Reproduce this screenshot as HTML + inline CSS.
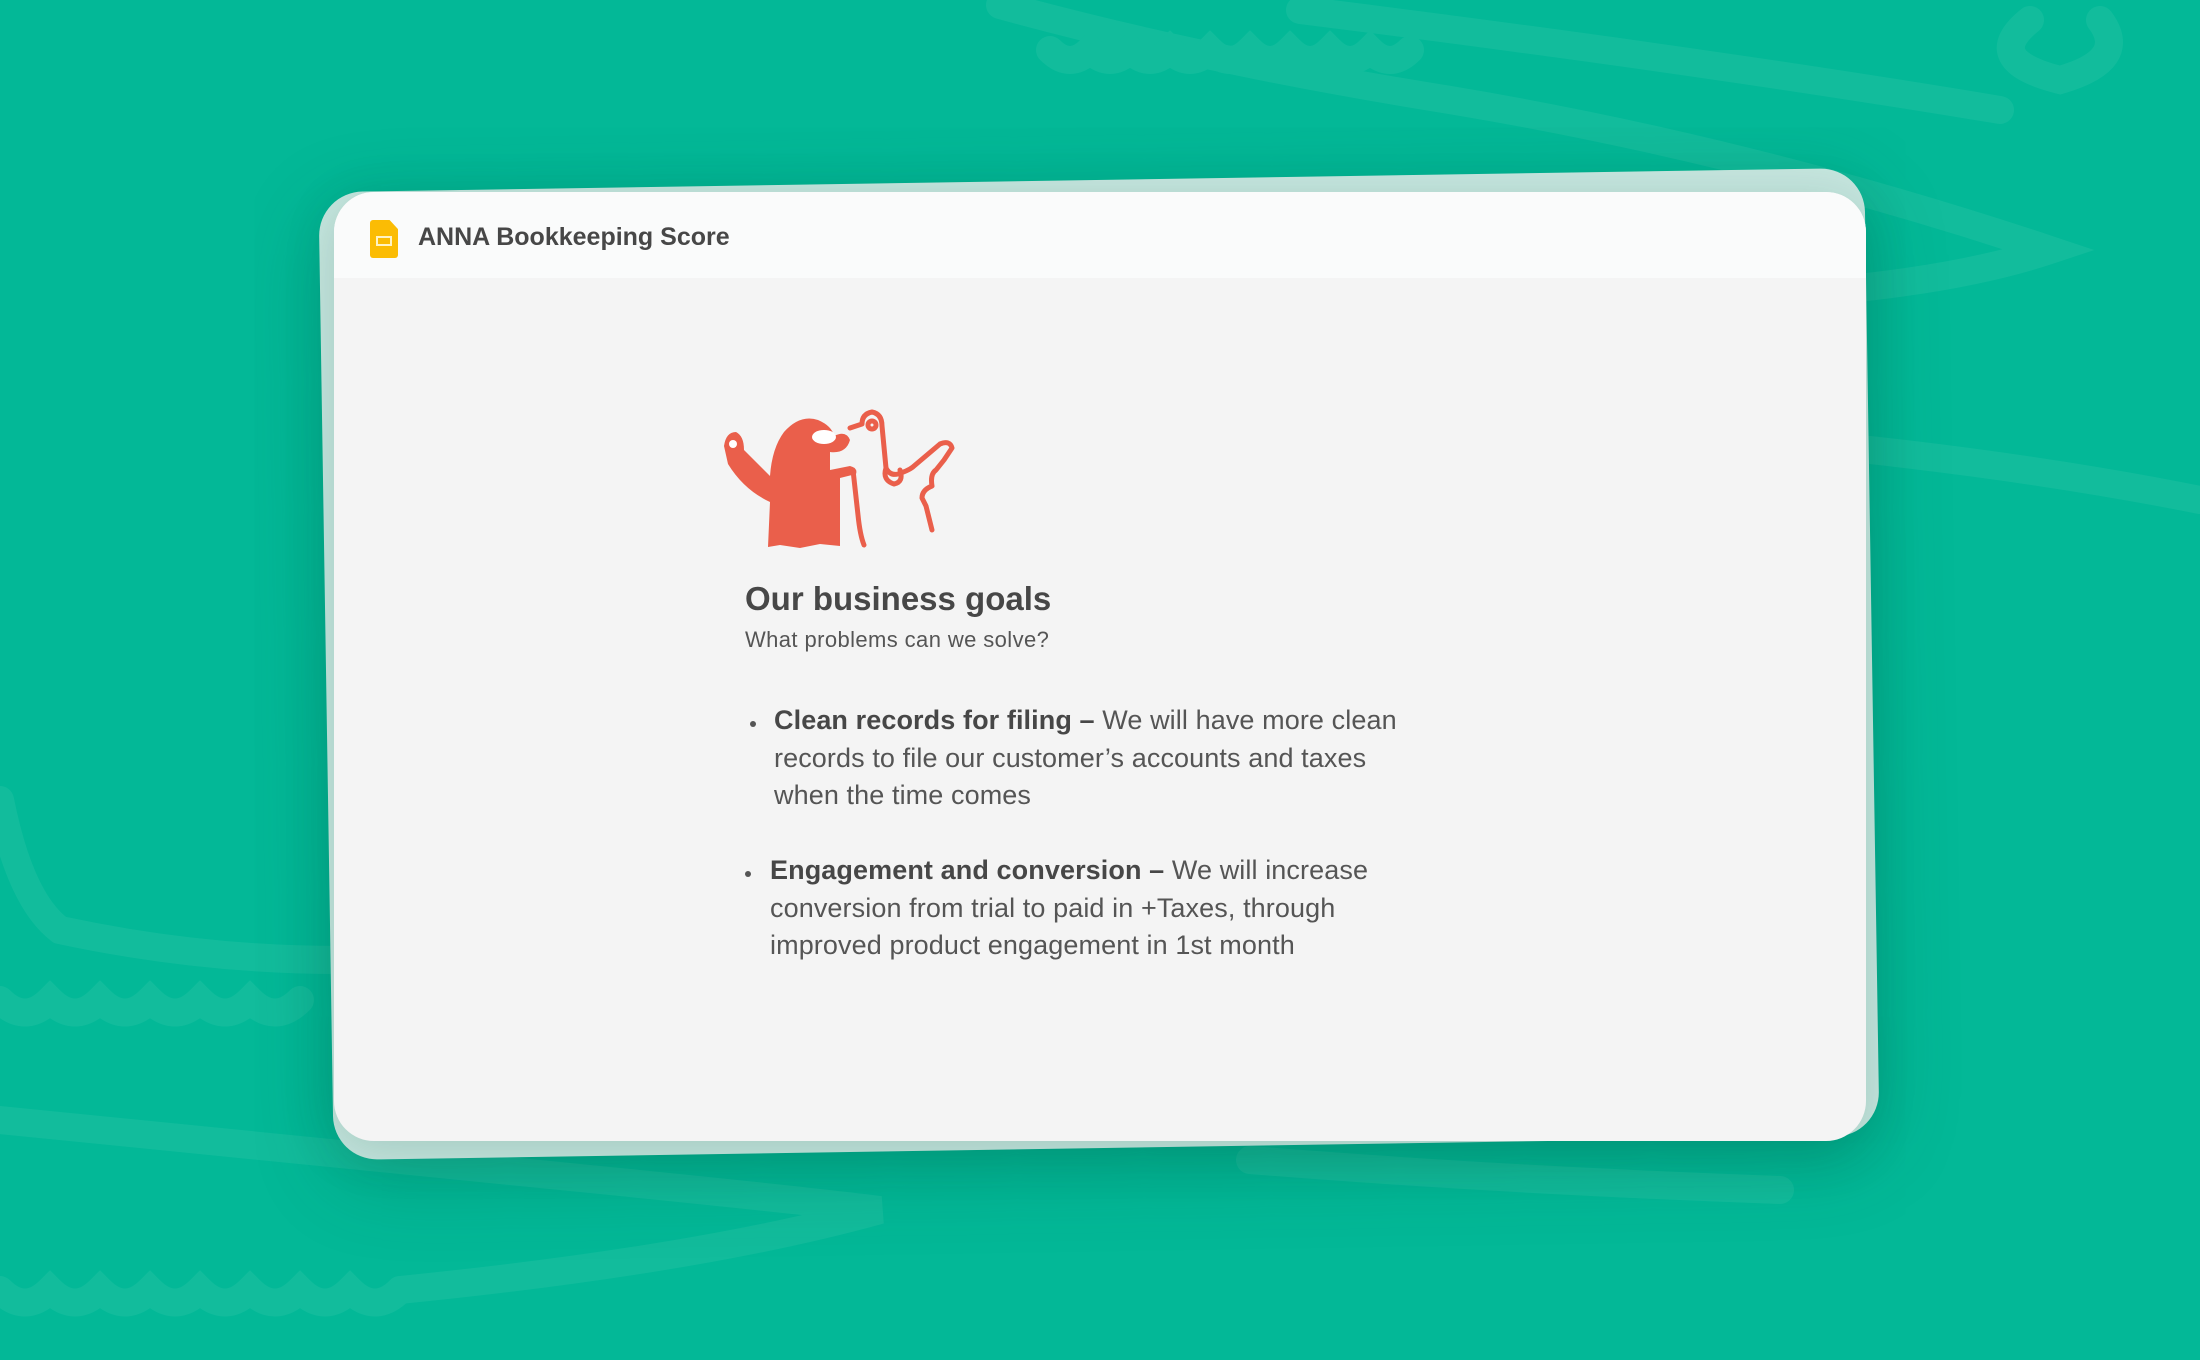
<!DOCTYPE html>
<html><head><meta charset="utf-8"><style>
html,body{margin:0;padding:0;width:2200px;height:1360px;overflow:hidden;background:#03b897;font-family:"Liberation Sans",sans-serif}
.bgsvg{position:absolute;left:0;top:0}
.back{position:absolute;left:326px;top:180px;width:1546px;height:968px;background:#c6e6df;border-radius:44px;transform:rotate(-0.9deg);box-shadow:0 20px 80px rgba(0,80,60,.25)}
.card{position:absolute;left:334px;top:192px;width:1532px;height:949px;background:#f4f4f4;border-radius:40px;overflow:hidden;box-shadow:0 10px 50px rgba(0,70,50,.18)}
.hdr{height:86px;background:#fafbfb;position:relative}
.hdr .t{position:absolute;left:84px;top:31px;font-size:25px;font-weight:bold;color:#474747}
.logo{position:absolute;left:36px;top:28px;width:28px;height:38px;background:#fbbc04;border-radius:3px;clip-path:polygon(0 0,70% 0,100% 24%,100% 100%,0 100%)}
.logo i{position:absolute;left:6px;top:16px;width:16px;height:10px;border:2px solid #fff3c4;box-sizing:border-box}
.txt{position:absolute;color:#4d4d4d;white-space:nowrap}
h1{position:absolute;left:745px;top:580px;margin:0;font-size:33px;color:#474747}
.sub{left:745px;top:627px;font-size:22px;color:#555;letter-spacing:.4px}
.b{font-size:27px;line-height:37.5px;color:#555;letter-spacing:.1px}
.b strong{color:#474747}
.dot{position:absolute;width:6px;height:6px;border-radius:50%;background:#555}
</style></head><body>
<svg class="bgsvg" width="2200" height="1360" fill="none" stroke="#2ec6a8" stroke-linecap="round" stroke-width="28" opacity=".35">
<path d="M1000 5 Q1200 60 1450 100 Q1750 150 2050 250 Q1900 300 1600 300"/>
<path d="M1050 50 q20 20 40 0 q20 20 40 0 q20 20 40 0 q20 20 40 0 q20 20 40 0 q20 20 40 0 q20 20 40 0 q20 20 40 0 q20 20 40 0"/>
<path d="M1300 10 Q1700 60 2000 110"/>
<path d="M2030 20 Q1980 60 2060 80 Q2130 60 2100 20"/>
<path d="M1870 450 Q2050 470 2200 500"/>
<path d="M0 800 Q20 900 60 930 Q200 960 340 960"/>
<path d="M0 1000 q25 25 50 0 q25 25 50 0 q25 25 50 0 q25 25 50 0 q25 25 50 0 q25 25 50 0"/>
<path d="M0 1120 Q300 1150 600 1180 Q800 1200 880 1210 Q700 1260 400 1290"/>
<path d="M0 1290 q25 25 50 0 q25 25 50 0 q25 25 50 0 q25 25 50 0 q25 25 50 0 q25 25 50 0 q25 25 50 0 q25 25 50 0"/>
<path d="M1250 1160 Q1500 1180 1780 1190"/>
</svg>
<div class="back"></div>
<div class="card">
 <div class="hdr"><div class="logo"><i></i></div><div class="t">ANNA Bookkeeping Score</div></div>
</div>
<svg style="position:absolute;left:700px;top:390px" width="280" height="170" viewBox="0 0 280 170">
<g fill="#ea5f4b">
<path d="M24 56 Q26 42 36 42 Q44 46 44 60 L70 86 Q72 58 84 42 Q100 24 118 30 Q132 36 134 46 Q146 40 150 50 Q146 64 130 62 L130 80 L150 76 Q158 78 156 84 L140 88 L140 156 L120 154 L100 158 L80 155 L68 157 L70 112 Q44 100 28 74 Z"/>
</g>
<g fill="#fff" stroke="none"><ellipse cx="124" cy="47" rx="12" ry="7"/><circle cx="33" cy="54" r="4"/></g>
<g fill="none" stroke="#ea5f4b" stroke-width="5" stroke-linecap="round" stroke-linejoin="round">
<path d="M153 80 L158 125 Q160 145 164 155"/>
<path d="M150 38 L162 34 Q162 24 172 22 Q182 24 182 36 L186 78 Q190 86 198 84 Q210 80 214 76 L240 54 Q250 50 252 58 L244 70 L236 80 Q230 84 232 96 Q222 100 222 108 L226 116 L232 140"/>
<path d="M186 78 Q182 90 194 94 Q204 92 200 80"/>
<circle cx="172" cy="35" r="4"/>
</g>
</svg>
<h1>Our business goals</h1>
<div class="txt sub">What problems can we solve?</div>
<div class="dot" style="left:750px;top:721px"></div>
<div class="txt b" style="left:774px;top:702px"><strong>Clean records for filing –</strong> We will have more clean<br>records to file our customer’s accounts and taxes<br>when the time comes</div>
<div class="dot" style="left:745px;top:871px"></div>
<div class="txt b" style="left:770px;top:852px"><strong>Engagement and conversion –</strong> We will increase<br>conversion from trial to paid in +Taxes, through<br>improved product engagement in 1st month</div>
</body></html>
